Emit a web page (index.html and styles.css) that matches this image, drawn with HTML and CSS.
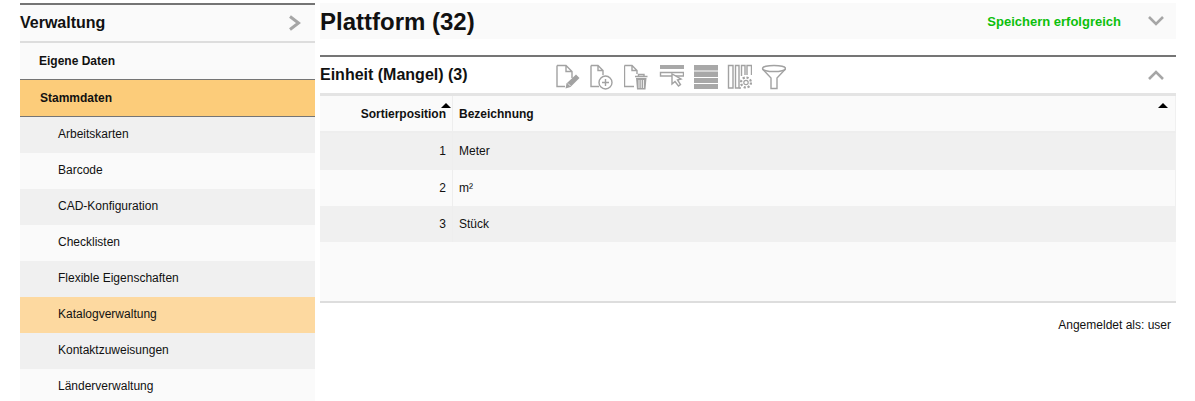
FILE: index.html
```html
<!DOCTYPE html>
<html lang="de">
<head>
    <meta charset="UTF-8">
    <title>Verwaltung</title>
    <link rel="stylesheet" href="styles.css">
</head>
<body>

    <div class="sidebar">
        <div class="side-head">
            <span>Verwaltung</span>
            <svg class="chevron" width="14" height="16" viewBox="0 0 14 16"><path d="M2 1.5 L10.5 8 L2 14.5" fill="none" stroke="#a6a6a6" stroke-width="3"/></svg>
        </div>
        <div class="side-group">Eigene Daten</div>
        <div class="side-group active">Stammdaten</div>
        <div class="side-item">Arbeitskarten</div>
        <div class="side-item">Barcode</div>
        <div class="side-item">CAD-Konfiguration</div>
        <div class="side-item">Checklisten</div>
        <div class="side-item">Flexible Eigenschaften</div>
        <div class="side-item selected">Katalogverwaltung</div>
        <div class="side-item">Kontaktzuweisungen</div>
        <div class="side-item">Länderverwaltung</div>
    </div>

    <div class="main">
        <div class="title-bar">
            <h1>Plattform (32)</h1>
            <span class="saved">Speichern erfolgreich</span>
            <svg class="toggle" width="16" height="10" viewBox="0 0 16 10"><path d="M1 1 L8 8 L15 1" fill="none" stroke="#a6a6a6" stroke-width="2.6"/></svg>
        </div>

        <div class="panel">
            <div class="panel-head">
                <h2>Einheit (Mangel) (3)</h2>
                <div class="tools">
                    <!-- edit -->
                    <svg width="26" height="26" viewBox="0 0 26 26" fill="none" stroke="#a2a2a2" stroke-width="1.4">
                        <path d="M1 1.500 H10 L16 7.500 V14 M10 1.500 V7.500 H16 M1 1.500 V22.500 H9"/>
                        <path d="M9.500 24.500 L10.500 19.500 L20 10.500 L23.500 14 L14.500 23 Z" fill="#a2a2a2" stroke="none"/>
                        <path d="M12 19.500 L14.500 22 " stroke="#fff" stroke-width=".8"/>
                    </svg>
                    <!-- add -->
                    <svg width="26" height="26" viewBox="0 0 26 26" fill="none" stroke="#a2a2a2" stroke-width="1.4">
                        <path d="M1 1.500 H8 L13 6.500 V11 M8 1.500 V6.500 H13 M1 1.500 V22.500 H9"/>
                        <circle cx="15.500" cy="18.500" r="6.500"/>
                        <path d="M15.500 15 V22 M12 18.500 H19"/>
                    </svg>
                    <!-- delete -->
                    <svg width="26" height="26" viewBox="0 0 26 26" fill="none" stroke="#a2a2a2" stroke-width="1.4">
                        <path d="M.5 1.500 H8 L13 6.500 V10 M8 1.500 V6.500 H13 M.5 1.500 V22.500 H10"/>
                        <path d="M11 12.500 H23.500 M14.500 12 V10.500 H20 V12"/>
                        <path d="M12 14 H22.500 L21.500 25.500 H13 Z" fill="#a2a2a2" stroke="none"/>
                        <path d="M15 16 V24 M17.250 16 V24 M19.500 16 V24" stroke="#fff" stroke-width=".8"/>
                    </svg>
                    <!-- row select -->
                    <svg width="26" height="26" viewBox="0 0 26 26" fill="none" stroke="#a2a2a2" stroke-width="1.4">
                        <path d="M2 1 H26 V5 H2 Z" fill="#a8a8a8" stroke="none"/>
                        <path d="M2.500 8.500 H25.500 V12 H2.500 Z"/>
                        <path d="M14 10 V20 L17 17.500 L20.500 22 L22.500 20.500 L19.500 16 L23 15 Z" fill="#fff"/>
                    </svg>
                    <!-- rows -->
                    <svg width="26" height="26" viewBox="0 0 26 26">
                        <path d="M2 1 H26 V6.500 H2 Z M2 7.500 H26 V13 H2 Z M2 14 H26 V19 H2 Z M2 20 H26 V25 H2 Z" fill="#a8a8a8"/>
                    </svg>
                    <!-- columns -->
                    <svg width="26" height="26" viewBox="0 0 26 26" fill="none" stroke="#a2a2a2" stroke-width="1.4">
                        <path d="M2.500 1.500 H7 V24 H2.500 Z M9.500 1.500 H13 V24 H9.500 Z"/>
                        <path d="M15.500 12 V1.500 H19 V11 M21 11 V1.500 H25.500 V11 M15 24 H13"/>
                        <circle cx="20" cy="18.500" r="5" stroke-width="2.200" stroke-dasharray="2.200 1.700"/>
                        <circle cx="20" cy="18.500" r="2.200" stroke-width="1.200"/>
                    </svg>
                    <!-- filter -->
                    <svg width="26" height="26" viewBox="0 0 26 26" fill="none" stroke="#a2a2a2" stroke-width="1.4">
                        <ellipse cx="14" cy="4.500" rx="11.500" ry="3"/>
                        <path d="M2.500 5 L11 14 V24.500 H17 V14 L25.500 5"/>
                    </svg>
                </div>
                <svg class="toggle" width="16" height="10" viewBox="0 0 16 10"><path d="M1 9 L8 2 L15 9" fill="none" stroke="#a6a6a6" stroke-width="2.6"/></svg>
            </div>

            <div class="table-wrap">
                <div class="row head">
                    <div class="col-pos">Sortierposition<span class="sort"></span></div>
                    <div class="col-name">Bezeichnung<span class="sort end"></span></div>
                </div>
                <div class="row odd">
                    <div class="col-pos">1</div>
                    <div class="col-name">Meter</div>
                </div>
                <div class="row">
                    <div class="col-pos">2</div>
                    <div class="col-name">m²</div>
                </div>
                <div class="row odd">
                    <div class="col-pos">3</div>
                    <div class="col-name">Stück</div>
                </div>
            </div>
        </div>

        <div class="login-info">Angemeldet als: user</div>
    </div>

</body>
</html>
```

FILE: styles.css
```css
* {
    margin: 0;
    padding: 0;
    box-sizing: border-box;
    font-family: 'Liberation Sans', Arial, sans-serif;
}

body {
    display: flex;
    height: 401px;
    overflow: hidden;
    background: #fff;
    padding: 3px 19px 0 20px;
    gap: 5px;
    color: #111;
}

.sidebar {
    width: 295px;
    flex-shrink: 0;
}

.side-head {
    display: flex;
    justify-content: space-between;
    align-items: center;
    height: 40px;
    padding-right: 13px;
    background: #fafafa;
    border-top: 2px solid #757575;
    border-bottom: 2px solid #ddd;
    font-size: 16px;
    font-weight: bold;
}

.side-group {
    height: 37px;
    padding: 11px 0 0 19px;
    background: #fafafa;
    border-bottom: 1px solid #757575;
    font-size: 12px;
    font-weight: bold;
}

.side-group.active {
    background: #fccc7a;
    padding-left: 20px;
}

.side-item {
    height: 36px;
    padding: 10px 0 0 38px;
    background: #fafafa;
    font-size: 12px;
}

.side-item:nth-child(even) {
    background: #f0f0f0;
}

.side-item.selected {
    background: #fdd9a0;
}

.main {
    flex: 1;
}

.title-bar {
    display: flex;
    align-items: center;
    height: 36px;
    background: #fafafa;
    padding-right: 12px;
}

.title-bar h1 {
    flex: 1;
    font-size: 24px;
    font-weight: bold;
    padding-top: 1px;
}

.saved {
    color: #0cc00c;
    font-size: 13px;
    font-weight: bold;
    margin-right: 27px;
}

.panel {
    margin-top: 16px;
    border-top: 2px solid #757575;
    border-bottom: 2px solid #ddd;
}

.panel-head {
    display: flex;
    align-items: center;
    height: 39px;
    padding-right: 12px;
    border-bottom: 3px solid #e4e4e4;
}

.panel-head h2 {
    width: 236px;
    font-size: 16px;
    font-weight: bold;
}

.tools {
    flex: 1;
    display: flex;
    gap: 8px;
    margin-top: 4px;
}

.table-wrap {
    height: 205px;
    background: #fafafa;
}

.row {
    display: flex;
    height: 36px;
    font-size: 12px;
    line-height: 36px;
    border-right: 1px solid #f0f0f0;
}

.row.odd {
    background: #f0f0f0;
}

.row.head {
    height: 37px;
    font-weight: bold;
    border-bottom: 2px solid #eee;
}

.row.head + .row {
    height: 37px;
    line-height: 37px;
}

.col-pos {
    position: relative;
    width: 133px;
    padding-right: 6px;
    text-align: right;
    border-right: 1px solid #eee;
}

.col-name {
    position: relative;
    flex: 1;
    padding-left: 6px;
}

.sort {
    position: absolute;
    top: 7px;
    right: 1px;
    border-left: 5px solid transparent;
    border-right: 5px solid transparent;
    border-bottom: 5px solid #000;
}

.sort.end {
    right: 7px;
}

.login-info {
    margin-top: 15px;
    padding-right: 5px;
    text-align: right;
    font-size: 12px;
}
```
